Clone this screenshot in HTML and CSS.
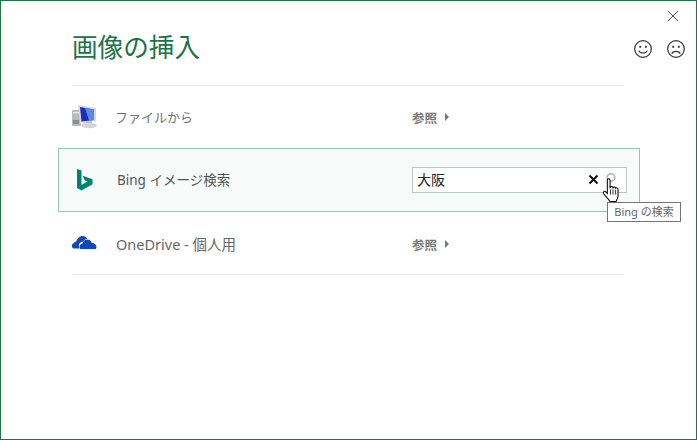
FILE: index.html
```html
<!DOCTYPE html>
<html lang="ja">
<head>
<meta charset="utf-8">
<title>画像の挿入</title>
<link rel="stylesheet" href="styles.css">
</head>
<body>
<div class="dialog">
  <div class="topbar">
    <svg class="close" width="12" height="12" viewBox="0 0 12 12"><path d="M1 1l10 10M11 1L1 11" stroke="#555" stroke-width="1" fill="none"/></svg>
  </div>
  <header class="header">
    <h1 class="title">画像の挿入</h1>
    <div class="feedback">
      <svg width="20" height="20" viewBox="0 0 20 20"><circle cx="10" cy="10" r="8.3" fill="none" stroke="#333" stroke-width="1.2"/><circle cx="7.2" cy="7.8" r="1.1" fill="#333"/><circle cx="12.8" cy="7.8" r="1.1" fill="#333"/><path d="M5.8 11.6c1 3.2 7.4 3.2 8.4 0" fill="none" stroke="#333" stroke-width="1.2"/></svg>
      <svg width="20" height="20" viewBox="0 0 20 20"><circle cx="10" cy="10" r="8.3" fill="none" stroke="#333" stroke-width="1.2"/><circle cx="7.2" cy="7.8" r="1.1" fill="#333"/><circle cx="12.8" cy="7.8" r="1.1" fill="#333"/><path d="M5.8 14.8c1-3.2 7.4-3.2 8.4 0" fill="none" stroke="#333" stroke-width="1.2"/></svg>
    </div>
  </header>
  <main class="list">
    <div class="row row-file">
      <span class="icon">
        <svg width="26" height="24" viewBox="0 0 26 24">
          <rect x="0" y="5" width="9" height="16" rx="1" fill="#b9bcbc"/>
          <rect x="1" y="7" width="6" height="1.5" fill="#eaeaea"/>
          <rect x="1" y="15" width="6" height="4" fill="#8c8f90"/>
          <path d="M6 0L24 3V16L8 18.5Z" fill="#d5d8dc"/>
          <path d="M8 2L22 4.5V15L9.5 16.5Z" fill="#1a2fb8"/>
          <path d="M13 3L22 4.5V15L17 15.5Z" fill="#5c88e6"/>
          <rect x="14" y="16" width="6" height="3" fill="#c4c6c6"/>
          <ellipse cx="17" cy="20.5" rx="8" ry="2.8" fill="#d4d6d6"/>
        </svg>
      </span>
      <span class="label">ファイルから</span>
      <span class="browse">参照<i class="arrow"></i></span>
    </div>
    <div class="row row-bing">
      <span class="icon">
        <svg width="16" height="22" viewBox="0 0 16 22"><path d="M0 0L4.5 1.5V16L10.5 12.6L7.6 11.2L5.8 6.8L15.5 10.2V15.2L4.5 21.5L0 19Z" fill="#008272"/></svg>
      </span>
      <span class="label">Bing イメージ検索</span>
      <div class="search">
        <span class="query">大阪</span>
        <svg class="clear" width="11" height="11" viewBox="0 0 11 11"><path d="M1.5 1.5l8 8M9.5 1.5l-8 8" stroke="#111" stroke-width="2" fill="none"/></svg>
        <svg class="lens" width="12" height="14" viewBox="0 0 12 14"><circle cx="6" cy="5.5" r="3.8" fill="none" stroke="#b5b5b5" stroke-width="1.6"/></svg>
      </div>
      <svg class="cursor" width="20" height="26" viewBox="0 0 19 25">
        <path d="M5 2c0-1.700 2.600-1.700 2.600 0v7.200l.3-.1c.4-1.300 2.400-1.200 2.600.2.500-1 2.400-.8 2.500.5.600-.7 2.300-.4 2.300 1v6.200c0 2.500-1 3.500-1.800 5.500H7.500C6 20 3.200 17.500 1.500 15.200.5 13.500 2.300 12.100 3.500 13.300L5 14.800Z" fill="#fff" stroke="#000" stroke-width="1"/>
        <path d="M8 11v5M10.500 11v5M13 11.500v4.500" stroke="#000" stroke-width=".8" fill="none"/>
      </svg>
      <div class="tooltip">Bing の検索</div>
    </div>
    <div class="row row-drive">
      <span class="icon">
        <svg width="26" height="16" viewBox="0 0 26 16"><path d="M3 14.500C.5 14 0 11 2 9.800 2.500 8.500 4 7.800 5 8 6 4.500 8.500 2 11.500 2c2.200 0 3.800 1 4.800 2.800-1.800.2-3.500 1.300-4.200 3-3-.3-4.800 2.500-4 5.200L8.500 14.500Z" fill="#0f49b5"/><path d="M9.500 15C8 14 8 10 11.500 9.500 12 7 14 5.500 16.500 5.500c2.200 0 3.800 1.500 4.200 3.500 2.800-.2 4.800 1.800 4.800 4 0 1-.5 1.700-1 2Z" fill="#0f49b5"/></svg>
      </span>
      <span class="label">OneDrive - 個人用</span>
      <span class="browse">参照<i class="arrow"></i></span>
    </div>
  </main>
</div>
</body>
</html>
```
FILE: styles.css
```css
* { box-sizing: border-box; }
html, body { margin: 0; padding: 0; }
body {
  width: 697px;
  height: 440px;
  background: #fff;
  font-family: "Noto Sans", "Noto Sans CJK JP", sans-serif;
  overflow: hidden;
}
.dialog {
  position: relative;
  width: 697px;
  height: 440px;
  border: 1px solid #217346;
  background: #fff;
}
.topbar {
  display: flex;
  justify-content: flex-end;
  height: 31px;
  padding: 9px 17px 0 0;
}
.close { display: block; }
.header {
  display: flex;
  align-items: center;
  justify-content: space-between;
  height: 34px;
  padding: 0 10px 0 71px;
}
.title {
  margin: 0 0 2px;
  font-size: 25.6px;
  font-weight: 400;
  line-height: 34px;
  color: #217346;
}
.feedback {
  display: flex;
  gap: 13px;
}
.feedback svg { display: block; }
.list {
  width: 552px;
  height: 190px;
  margin: 19px 0 0 71px;
  border-top: 1px solid #e8e8e8;
  border-bottom: 1px solid #e8e8e8;
}
.row {
  display: flex;
  align-items: center;
  color: #5a5a5a;
  font-size: 14px;
}
.row-file, .row-drive { height: 60px; }
.row-file { padding-top: 2px; }
.row-bing {
  position: relative;
  height: 64px;
  margin: 2px -16px 0 -14px;
  padding-left: 15px;
  background: #f7fbfa;
  border: 1px solid #93cbaa;
}
.row-drive { margin-top: 2px; }
.icon {
  display: flex;
  width: 43px;
  flex: none;
  align-items: center;
}
.row-bing .icon { padding-left: 3px; }
.row-drive .icon { width: 45px; margin-top: -5px; margin-left: -1px; }
.label {
  width: 295px;
  flex: none;
  line-height: 20px;
}
.row-file .label { width: 297px; font-size: 13px; color: #737373; }
.row-bing .label { font-size: 13.5px; color: #555; }
.row-drive .label { width: 296px; font-size: 14.5px; color: #666; }
.browse {
  display: flex;
  align-items: center;
  font-size: 12.5px;
  font-weight: 700;
  color: #7a7a7a;
}
.arrow {
  width: 0;
  height: 0;
  margin-left: 8px;
  border-left: 4px solid #777;
  border-top: 4px solid transparent;
  border-bottom: 4px solid transparent;
}
.search {
  display: flex;
  align-items: center;
  width: 215px;
  height: 26px;
  padding: 0 9px 0 4px;
  background: #fff;
  border: 1px solid #bcc7c3;
}
.query {
  flex: 1;
  margin-bottom: 3px;
  font-size: 14px;
  color: #222;
}
.clear { display: block; margin-right: 5px; margin-bottom: 1px; }
.lens { display: block; margin-bottom: 3px; margin-left: 1px; }
.cursor {
  position: absolute;
  left: 543px;
  top: 29px;
}
.tooltip {
  position: absolute;
  left: 548px;
  top: 53px;
  width: 74px;
  height: 20px;
  font-size: 11px;
  line-height: 18px;
  text-align: center;
  color: #666;
  background: #fff;
  border: 1px solid #767676;
  white-space: nowrap;
}
```
